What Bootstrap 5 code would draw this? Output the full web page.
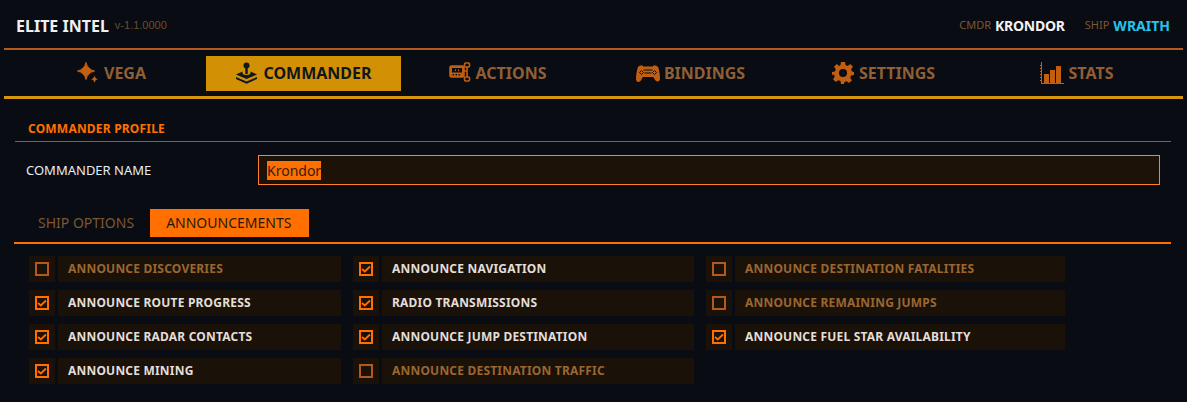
<!DOCTYPE html>
<html lang="en">
<head>
  <meta charset="UTF-8" />
  <meta name="viewport" content="width=device-width, initial-scale=1.0"/>
  <title>Elite Intel</title>
  <link href="https://cdn.jsdelivr.net/npm/bootstrap@5.3.2/dist/css/bootstrap.min.css" rel="stylesheet">
  <style>
    html, body { height: 402px; overflow: hidden; }
    body { background: #090c12; font-family: "Noto Sans", sans-serif; color: #e6e6e6; }

    .top-bar { height: 48px; padding: 3px 17px 0 16px; }
    .app-name { font-size: 16px; font-weight: 700; color: #f0f0f0; }
    .app-ver { font-family: "Liberation Sans", sans-serif; font-size: 11px; color: #6b4c2e; margin: -1px 0 0 6px; }
    .meta-key { font-size: 11px; color: #7b5833; margin-right: 4px; }
    .meta-val { font-size: 14px; font-weight: 700; color: #f2f2f2; }
    .meta-cmdr { letter-spacing: -.25px; margin-right: 20px; }
    .meta-ship { color: #25c4ea; }
    .rule-top { height: 2px; margin: 0 4px; background: #b35b1c; }

    .main-tabs { height: 46px; padding: 6px 0 5px 13px; }
    .main-tab { width: 195px; margin-right: -2px; height: 35px; padding: 0 0 1px 2px; font-size: 16px; font-weight: 700; color: #8f5f35; }
    .main-tab svg { fill: #c25e10; color: #c25e10; margin-right: 5px; flex: none; }
    .main-tab.is-on { background: #d29105; color: #10171f; position: relative; z-index: 1; padding-left: 0; }
    .main-tab.is-on svg { fill: #10171f; color: #10171f; }
    .main-tab svg.icon-pad { margin-right: 4px; }
    .rule-main { height: 3px; margin: 0 4px; background: #d6950c; }

    .sect-title { font-size: 12px; font-weight: 700; letter-spacing: .2px; color: #ff7000; padding: 21px 0 0 28px; height: 42px; line-height: 17px; }
    .sect-rule { height: 1px; margin: 0 16px 0 15px; background: #8f5a2c; }

    .name-row { height: 30px; margin: 13px 27px 0 26px; }
    .name-label { flex: none; width: 232px; padding-top: 1px; font-size: 13px; color: #e4eef6; }
    .name-input.form-control { height: 30px; border: 1px solid #ff8130; border-radius: 0; background: #1d1208; color: #2a1a0a; font-size: 14px; padding: 0 8px; box-shadow: none; }
    .name-input::selection { background: #ff7000; color: #33200f; }

    .sub-tabs { height: 28px; margin: 24px 0 0 22px; }
    .sub-tab { height: 28px; padding: 0 16px 2px; font-size: 14px; color: #7b5833; }
    .sub-tab.is-on { background: #ff7000; color: #2a1a0a; padding-right: 18px; }
    .rule-sub { height: 2px; margin: 5px 16px 0 14px; background: #ff7000; }

    .opt-grid { display: grid; grid-template-columns: 312px 341px 359px; gap: 8px 12px; margin: 12px 0 0 29px; }
    .opt-row { display: flex; gap: 3px; height: 26px; }
    .opt-box { width: 26px; background: #1a1108; flex: none; }
    .opt-box span { width: 14px; height: 14px; border: 2px solid #ff7000; display: block; }
    .opt-box svg { display: block; }
    .opt-label { flex: 1; background: #1a1108; padding-left: 10px; font-size: 12px; font-weight: 700; letter-spacing: .2px; color: #e2ded8; }
    .opt-row.is-off .opt-box span { border-color: #b5591a; }
    .opt-row.is-off .opt-label { color: #9a6632; }
  </style>
</head>
<body>

  <div class="top-bar d-flex align-items-center justify-content-between">
    <div class="d-flex align-items-center">
      <span class="app-name">ELITE INTEL</span>
      <span class="app-ver">v-1.1.0000</span>
    </div>
    <div class="d-flex align-items-center">
      <span class="meta-key">CMDR</span><span class="meta-val meta-cmdr">KRONDOR</span>
      <span class="meta-key">SHIP</span><span class="meta-val meta-ship">WRAITH</span>
    </div>
  </div>
  <div class="rule-top"></div>

  <!-- main tabs -->
  <div class="main-tabs d-flex">
    <div class="main-tab d-flex align-items-center justify-content-center">
      <svg width="22" height="22" viewBox="0 0 22 22"><path d="M9 .5C10 5 13 8 17.500 9 13 10 10 13 9 17.500 8 13 5 10 .5 9 5 8 8 5 9 .5z" stroke="#c25e10" stroke-width="1"/><path d="M17.500 13.500c.4 2 1.200 3 3.500 3.800-2.300.7-3.100 1.700-3.500 3.700-.4-2-1.200-3-3.500-3.700 2.300-.8 3.100-1.800 3.500-3.800z"/></svg>
      <span>VEGA</span>
    </div>
    <div class="main-tab is-on d-flex align-items-center justify-content-center">
      <svg width="23" height="23" viewBox="0 0 23 23"><circle cx="11.500" cy="3.500" r="3"/><rect x="10.300" y="6" width="2.400" height="6"/><path d="M1 12.500 7.500 9.500v1.500c0 1 1.500 2 4 2s4-1 4-2V9.500l6.500 3-10.500 4.500z"/><path d="M1 15l10.500 4.500L22 15v2l-10.500 4.700L1 17z"/></svg>
      <span>COMMANDER</span>
    </div>
    <div class="main-tab d-flex align-items-center justify-content-center">
      <svg width="22" height="22" viewBox="0 0 22 22"><g fill="none" stroke="currentColor" stroke-width="1.600"><rect x="1" y="4" width="14" height="11" rx="1.500" fill="#c25e10"/><rect x="15.500" y="1" width="5" height="4" rx="1"/><rect x="15.500" y="15" width="5" height="4" rx="1"/><path d="M15 9h2.500M18 5v10"/></g><rect x="3" y="6" width="10" height="4.500" fill="#090c12"/><path d="M7 7l-1.500 1.200L7 9.500zM9 7l1.500 1.200L9 9.500z"/><path d="M3.500 12h1.500v1.500H3.500zM6.500 12H8v1.500H6.500zM9.500 12H11v1.500H9.500z" fill="#090c12"/></svg>
      <span>ACTIONS</span>
    </div>
    <div class="main-tab d-flex align-items-center justify-content-center">
      <svg class="icon-pad" width="24" height="20" viewBox="0 0 24 20"><path d="M5 2.500h1.500l.8 1h9.400l.8-1H19c2.200 0 3.300 1.200 3.800 3.500.6 2.800 1.200 6.300 1.200 9 0 2-.8 3.500-2.400 3.500-1.500 0-2.300-1-3.100-2.500L17.200 14H6.800l-1.300 2.500C4.700 18 3.900 19 2.400 19 .8 19 0 17.500 0 15.500c0-2.700.6-6.200 1.200-9C1.700 3.700 2.800 2.500 5 2.500z"/><g fill="#090c12"><path d="M7.500 6.500h9v1h-9zM8.500 9.500h7v1h-7z"/><path d="M5.500 7.500l2 2-2 2-2-2zM18.500 7.500l2 2-2 2-2-2z" fill="none" stroke="#090c12"/></g></svg>
      <span>BINDINGS</span>
    </div>
    <div class="main-tab d-flex align-items-center justify-content-center">
      <svg width="22" height="22" viewBox="0 0 22 22"><path fill-rule="evenodd" d="M9 0h4l.5 3 2.200.9L18.200 2 21 4.800l-1.900 2.500L20 9.500l2 .5v3l-2.900.6-.9 2.200 1.800 2.500L17.200 21l-2.500-1.800-2.200.9L12 22H9l-.5-2.900-2.200-.9L3.800 20 1 17.200l1.800-2.500-.9-2.200L0 13v-3l2.900-.5.9-2.200L2 4.800 4.800 2l2.500 1.900 1.200-.9zM11 7a4 4 0 1 0 0 8 4 4 0 0 0 0-8z"/></svg>
      <span>SETTINGS</span>
    </div>
    <div class="main-tab d-flex align-items-center justify-content-center">
      <svg width="24" height="23" viewBox="0 0 24 23"><path d="M1 0h1v21h22v1H1z"/><path d="M0 3h1v1H0zM0 6h1v1H0zM0 9h1v1H0zM0 12h1v1H0zM0 15h1v1H0zM0 18h1v1H0z"/><rect x="4" y="12" width="5" height="9"/><rect x="10" y="8" width="5" height="13"/><rect x="16" y="4" width="5" height="17"/></svg>
      <span>STATS</span>
    </div>
  </div>
  <div class="rule-main"></div>

  <div class="sect-title">COMMANDER PROFILE</div>
  <div class="sect-rule"></div>

  <div class="name-row d-flex align-items-center">
    <label class="name-label" for="cmdrName">COMMANDER NAME</label>
    <input class="name-input form-control" id="cmdrName" type="text" value="Krondor">
  </div>

  <div class="sub-tabs d-flex">
    <div class="sub-tab d-flex align-items-center">SHIP OPTIONS</div>
    <div class="sub-tab is-on d-flex align-items-center">ANNOUNCEMENTS</div>
  </div>
  <div class="rule-sub"></div>

  <div class="opt-grid" id="optGrid"></div>

  <script src="https://cdn.jsdelivr.net/npm/bootstrap@5.3.2/dist/js/bootstrap.bundle.min.js"></script>
  <script>
    // listed row by row, [label, checked]
    const options = [
      ['ANNOUNCE DISCOVERIES', false], ['ANNOUNCE NAVIGATION', true], ['ANNOUNCE DESTINATION FATALITIES', false],
      ['ANNOUNCE ROUTE PROGRESS', true], ['RADIO TRANSMISSIONS', true], ['ANNOUNCE REMAINING JUMPS', false],
      ['ANNOUNCE RADAR CONTACTS', true], ['ANNOUNCE JUMP DESTINATION', true], ['ANNOUNCE FUEL STAR AVAILABILITY', true],
      ['ANNOUNCE MINING', true], ['ANNOUNCE DESTINATION TRAFFIC', false]
    ];
    const tick = '<svg width="10" height="10" viewBox="0 0 10 10"><path d="M1 5l2.800 2.500L9 2.500" fill="none" stroke="#ff7000" stroke-width="1.800"/></svg>';
    document.getElementById('optGrid').innerHTML = options.map(([label, on]) =>
      `<div class="opt-row ${on ? '' : 'is-off'}">
        <div class="opt-box d-flex align-items-center justify-content-center"><span>${on ? tick : ''}</span></div>
        <div class="opt-label d-flex align-items-center">${label}</div>
      </div>`).join('');

    const nameInput = document.getElementById('cmdrName');
    nameInput.focus();
    nameInput.select();
  </script>

</body>
</html>
